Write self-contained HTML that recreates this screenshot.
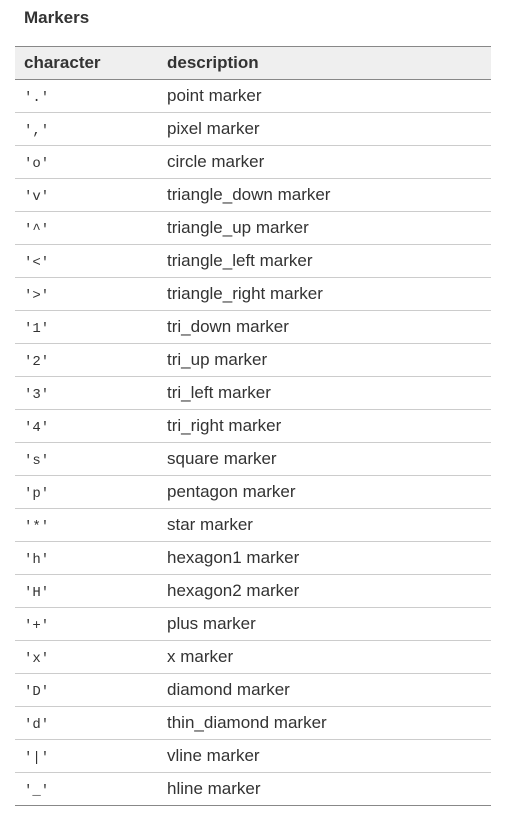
<!DOCTYPE html>
<html><head><style>
body{margin:0;background:#fff;font-family:"Liberation Sans",sans-serif;color:#333;}
h4{position:absolute;left:24px;top:8px;margin:0;font-size:17px;font-weight:bold;line-height:20px;}
table{position:absolute;left:15px;top:46px;width:476px;border-collapse:collapse;font-size:17px;}
th{background:#efefef;text-align:left;font-weight:bold;height:33px;padding:0 0 0 9px;border-top:1px solid #888;border-bottom:1px solid #888;box-sizing:border-box;}
td{height:33px;padding:0 0 0 9px;border-top:1px solid #ccc;box-sizing:border-box;}
tr:first-child td{border-top:none}
tr:last-child td{border-bottom:1px solid #888;}
td:first-child,th:first-child{width:143px;}
code{font-family:"Liberation Mono",monospace;font-size:14px;}
</style></head><body>
<h4>Markers</h4>
<table>
<thead><tr><th>character</th><th>description</th></tr></thead>
<tbody>
<tr><td><code>'.'</code></td><td>point marker</td></tr>
<tr><td><code>','</code></td><td>pixel marker</td></tr>
<tr><td><code>'o'</code></td><td>circle marker</td></tr>
<tr><td><code>'v'</code></td><td>triangle_down marker</td></tr>
<tr><td><code>'^'</code></td><td>triangle_up marker</td></tr>
<tr><td><code>'&lt;'</code></td><td>triangle_left marker</td></tr>
<tr><td><code>'&gt;'</code></td><td>triangle_right marker</td></tr>
<tr><td><code>'1'</code></td><td>tri_down marker</td></tr>
<tr><td><code>'2'</code></td><td>tri_up marker</td></tr>
<tr><td><code>'3'</code></td><td>tri_left marker</td></tr>
<tr><td><code>'4'</code></td><td>tri_right marker</td></tr>
<tr><td><code>'s'</code></td><td>square marker</td></tr>
<tr><td><code>'p'</code></td><td>pentagon marker</td></tr>
<tr><td><code>'*'</code></td><td>star marker</td></tr>
<tr><td><code>'h'</code></td><td>hexagon1 marker</td></tr>
<tr><td><code>'H'</code></td><td>hexagon2 marker</td></tr>
<tr><td><code>'+'</code></td><td>plus marker</td></tr>
<tr><td><code>'x'</code></td><td>x marker</td></tr>
<tr><td><code>'D'</code></td><td>diamond marker</td></tr>
<tr><td><code>'d'</code></td><td>thin_diamond marker</td></tr>
<tr><td><code>'|'</code></td><td>vline marker</td></tr>
<tr><td><code>'_'</code></td><td>hline marker</td></tr>
</tbody></table>
</body></html>
